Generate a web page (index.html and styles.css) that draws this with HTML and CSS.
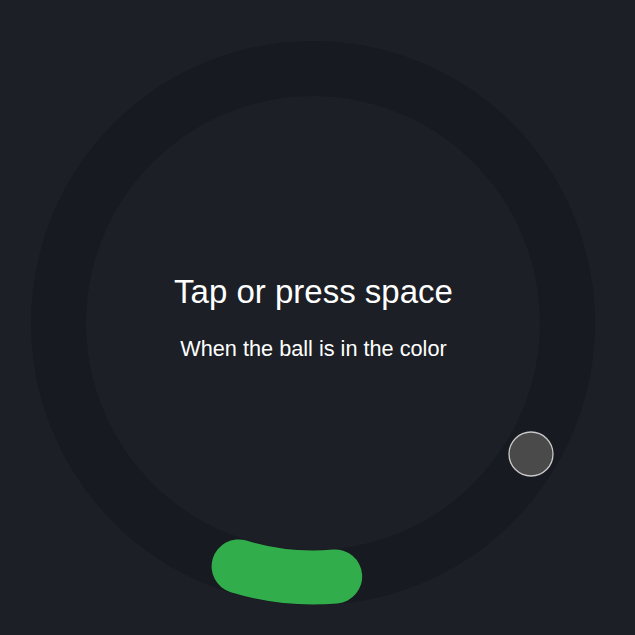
FILE: index.html
```html
<!DOCTYPE html>
<html lang="en">
<head>
<meta charset="utf-8">
<title>Tap game</title>
<link rel="stylesheet" href="styles.css">
</head>
<body>
<main class="stage">
  <svg class="board" width="635" height="635" viewBox="0 0 635 635" aria-hidden="true">
    <circle class="track" cx="313" cy="323" r="254.5"/>
    <path class="target" d="M335.2 576.5 A254.5 254.5 0 0 1 238.6 566.4"/>
    <circle class="ball" cx="531" cy="454" r="22"/>
  </svg>
  <div class="prompt">
    <h1 class="title">Tap or press space</h1>
    <p class="subtitle">When the ball is in the color</p>
  </div>
</main>
</body>
</html>
```

FILE: styles.css
```css
html, body {
  margin: 0;
  padding: 0;
  background: #1c1f26;
}
.stage {
  position: relative;
  width: 635px;
  height: 635px;
  overflow: hidden;
  background: #1c1f26;
  font-family: "Liberation Sans", Arial, sans-serif;
  color: #ffffff;
}
.board {
  position: absolute;
  left: 0;
  top: 0;
}
.track {
  fill: none;
  stroke: #171a20;
  stroke-width: 55;
}
.target {
  fill: none;
  stroke: #32ad4c;
  stroke-width: 54;
  stroke-linecap: round;
}
.ball {
  fill: #4a4a4a;
  stroke: #c9c9c9;
  stroke-width: 1.3;
}
.prompt {
  position: relative;
  display: flex;
  flex-direction: column;
  align-items: center;
  gap: 25px;
  padding-top: 273px;
  padding-right: 8px;
}
.title {
  margin: 0;
  font-size: 33px;
  line-height: 38px;
  font-weight: 400;
}
.subtitle {
  margin: 0;
  font-size: 21.7px;
  line-height: 26px;
}
```
